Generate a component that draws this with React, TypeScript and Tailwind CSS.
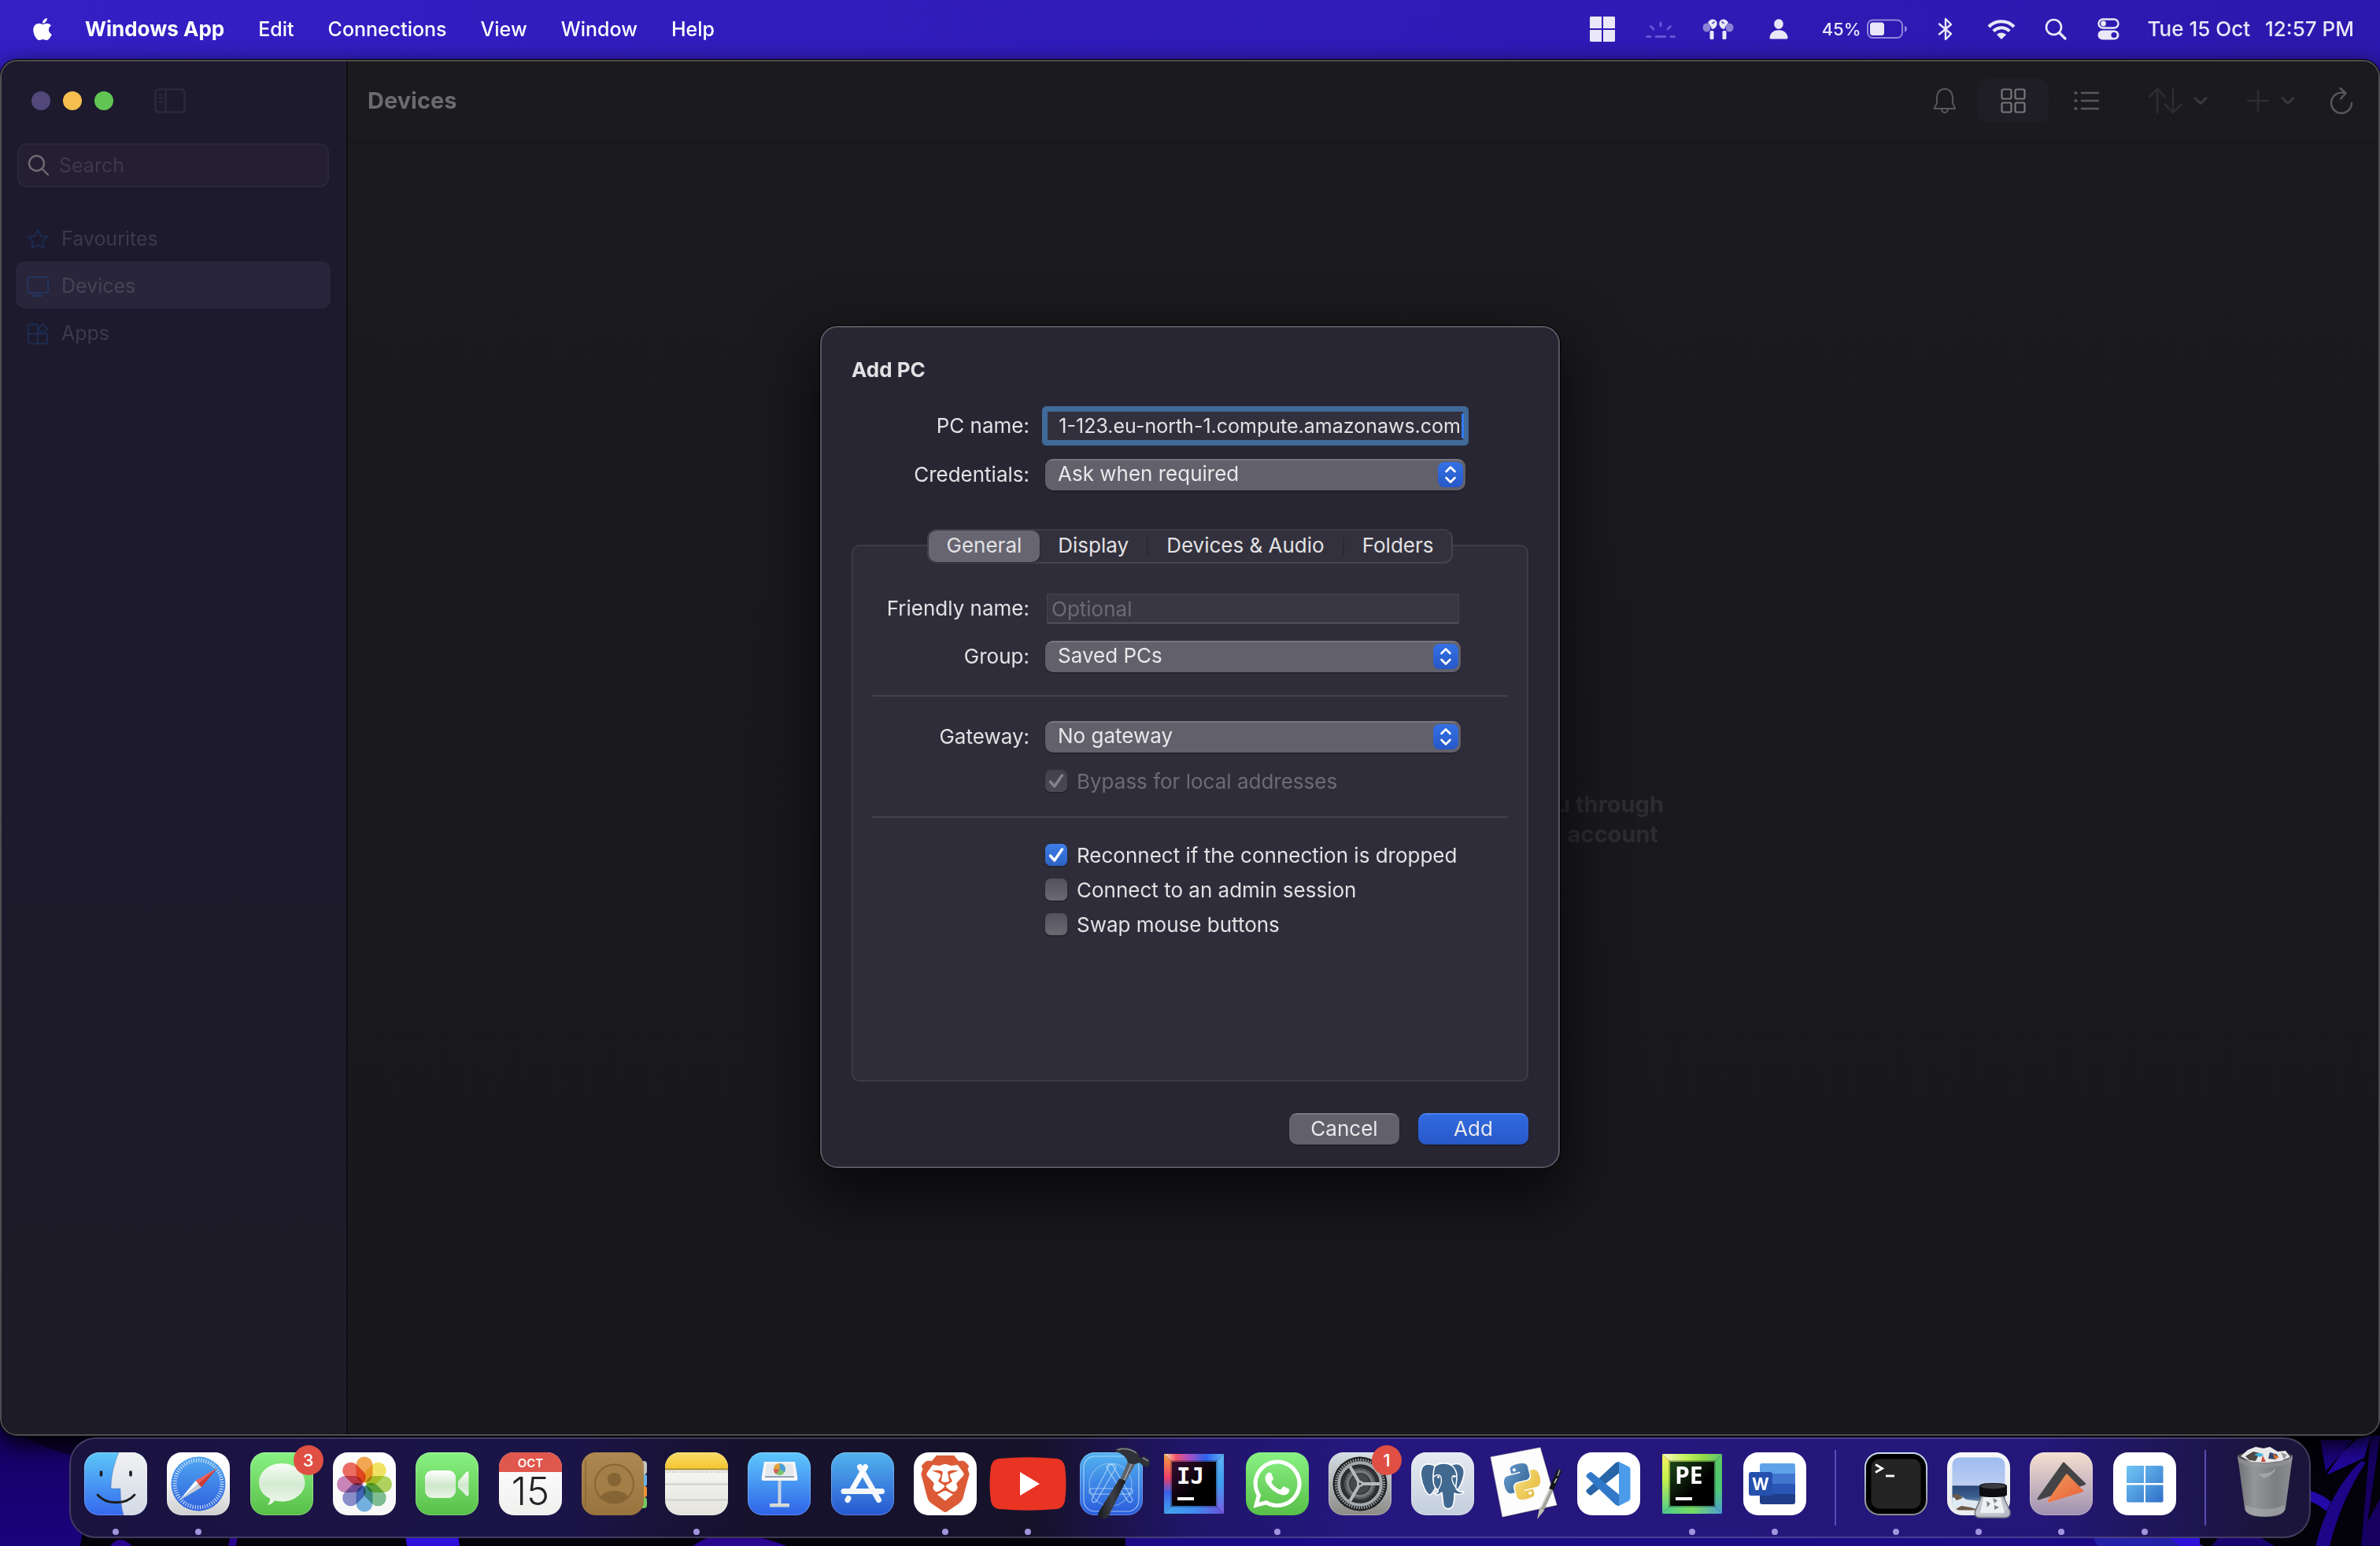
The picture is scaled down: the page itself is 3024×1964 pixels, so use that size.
import React, { useState } from "react";
import { FaApple, FaWhatsapp } from "react-icons/fa";
import { SiBrave } from "react-icons/si";

type Stop = [string, string];

function Lin({ id, stops, x2 = "0", y2 = "1" }: { id: string; stops: Stop[]; x2?: string; y2?: string }) {
  return (
    <linearGradient id={id} x1="0" y1="0" x2={x2} y2={y2}>
      {stops.map(([o, c]) => (
        <stop key={o} offset={o} stopColor={c} />
      ))}
    </linearGradient>
  );
}

function Tile({ id, stops, children }: { id: string; stops: Stop[]; children?: React.ReactNode }) {
  return (
    <svg viewBox="0 0 80 80" className="size-20 shrink-0 overflow-visible" aria-hidden="true">
      <defs>
        <Lin id={id} stops={stops} />
        <clipPath id={id + "-clip"}>
          <rect width="80" height="80" rx="19" />
        </clipPath>
      </defs>
      <rect width="80" height="80" rx="19" fill={`url(#${id})`} />
      <rect x="0.5" y="0.5" width="79" height="79" rx="18.5" fill="none" stroke="#fff" strokeOpacity="0.25" />
      {children}
    </svg>
  );
}

function Finder() {
  return (
    <Tile id="finder" stops={[["0", "#5cc6f8"], ["1", "#3468ee"]]}>
      <defs>
        <Lin id="finder-face" stops={[["0", "#f1f1f3"], ["1", "#d2dae6"]]} />
      </defs>
      <g clipPath="url(#finder-clip)">
        <path d="M44 0 C38 14 34 30 34 46 H46 C46 58 47 70 50 80 H80 V0 Z" fill="url(#finder-face)" />
      </g>
      <path d="M44 0 C38 14 34 30 34 46 H46 C46 58 47 70 50 80" fill="none" stroke="#4a6fa8" strokeOpacity="0.45" />
      <path d="M21.500 25 V29 M59 25 V29" stroke="#1c1c1e" strokeWidth="3.600" strokeLinecap="round" />
      <path d="M17 54 C28 67 53 67 64 54" fill="none" stroke="#1c1c1e" strokeWidth="2.800" strokeLinecap="round" />
    </Tile>
  );
}

function Safari() {
  return (
    <Tile id="safari" stops={[["0", "#ffffff"], ["0.4", "#fafafa"], ["1", "#cfcfcf"]]}>
      <defs>
        <Lin id="safari-dial" stops={[["0", "#4fa6f1"], ["1", "#2f62dd"]]} />
      </defs>
      <circle cx="40" cy="40" r="34.500" fill="url(#safari-dial)" />
      <circle cx="40" cy="40" r="30" fill="none" stroke="#e4f0fc" strokeOpacity="0.9" strokeWidth="5" strokeDasharray="1.100 2.041" />
      <path d="M64 20 L36.500 36 L40 40 Z" fill="#f0615a" />
      <path d="M64 20 L44 44.500 L40 40 Z" fill="#cf3a34" />
      <path d="M16 61 L36.500 36 L40 40 Z" fill="#ffffff" />
      <path d="M16 61 L44 44.500 L40 40 Z" fill="#c9cdd2" />
    </Tile>
  );
}

function Messages() {
  return (
    <Tile id="messages" stops={[["0", "#8af283"], ["1", "#58bf48"]]}>
      <defs>
        <Lin id="messages-bubble" stops={[["0", "#f7fdf6"], ["0.5", "#d5ead2"], ["1", "#eef8ec"]]} />
      </defs>
      <path
        d="M40 14 C56 14 69.500 25 69.500 38.500 C69.500 52 56 62.500 40 62.500 C36.500 62.500 33.500 62 31 61.300 C29 64.500 26 66 22 67 C24 64 25.500 61.500 25 58.800 C16 54.500 11 47 11 38.500 C11 25 24 14 40 14 Z"
        fill="url(#messages-bubble)"
      />
    </Tile>
  );
}

const petals = ["#f29a38", "#f0e14a", "#a5cf46", "#6cb984", "#5fa6e0", "#7a7fc4", "#c173b0", "#ea5548"];

function Photos() {
  return (
    <Tile id="photos" stops={[["0", "#ffffff"], ["1", "#f7f7f8"]]}>
      {petals.map((c, i) => (
        <rect
          key={c}
          x="29.500"
          y="5.500"
          width="21"
          height="33"
          rx="10.500"
          fill={c}
          fillOpacity="0.86"
          className="mix-blend-multiply"
          transform={`rotate(${i * 45} 40 40.500)`}
        />
      ))}
      <circle cx="40" cy="40.500" r="1.600" fill="#fff" />
    </Tile>
  );
}

function FaceTime() {
  return (
    <Tile id="facetime" stops={[["0", "#8af283"], ["1", "#58bf48"]]}>
      <defs>
        <Lin id="facetime-cam" stops={[["0", "#ffffff"], ["0.55", "#cfe8cb"], ["1", "#e8f5e6"]]} />
      </defs>
      <rect x="12" y="23" width="39" height="35" rx="9" fill="url(#facetime-cam)" />
      <path d="M54 37 L64.500 25 Q67.500 23 67.500 27 V53 Q67.500 57 64.500 55 L54 44.500 Z" fill="url(#facetime-cam)" />
    </Tile>
  );
}

function Calendar() {
  return (
    <Tile id="calendar" stops={[["0", "#ffffff"], ["1", "#f1f0ef"]]}>
      <g clipPath="url(#calendar-clip)">
        <rect width="80" height="25" fill="#e0574d" />
      </g>
      <text x="40" y="19" textAnchor="middle" fontSize="15" fontWeight="600" fill="#fff">OCT</text>
      <text x="40" y="67" textAnchor="middle" fontSize="49" fontWeight="300" fill="#242424">15</text>
    </Tile>
  );
}

function Contacts() {
  return (
    <svg viewBox="0 0 80 80" className="size-20 shrink-0 overflow-visible" aria-hidden="true">
      <defs>
        <Lin id="contacts" stops={[["0", "#ae8850"], ["1", "#98743f"]]} />
      </defs>
      <rect x="70" y="11" width="13" height="17" rx="4" fill="#c4c4c0" />
      <rect x="70" y="28" width="13" height="15" rx="3" fill="#6db4e8" />
      <rect x="70" y="43" width="13" height="14" rx="3" fill="#ec9434" />
      <rect x="70" y="57" width="13" height="14" rx="4" fill="#74c95e" />
      <rect width="79" height="80" rx="18" fill="url(#contacts)" />
      <path d="M5 10 V70" stroke="#8a6734" strokeWidth="1.500" />
      <circle cx="41.500" cy="40" r="24.500" fill="#a37e47" stroke="#876533" strokeWidth="2" />
      <circle cx="41.500" cy="34.500" r="8.800" fill="#866535" />
      <path d="M24 57 C28 46 55 46 59 57 C50 67 33 67 24 57 Z" fill="#866535" />
    </svg>
  );
}

function Notes() {
  return (
    <Tile id="notes" stops={[["0", "#fbfbfa"], ["1", "#e4e3dd"]]}>
      <defs>
        <Lin id="notes-top" stops={[["0", "#f9dc6c"], ["1", "#f5c62f"]]} />
      </defs>
      <g clipPath="url(#notes-clip)">
        <rect width="80" height="21" fill="url(#notes-top)" />
        <path d="M0 21.500 H80" stroke="#a88f3b" strokeWidth="2" />
        <path d="M2 25 H80" stroke="#bdbcb8" strokeWidth="2" strokeDasharray="1.500 2" />
        <path d="M0 40.500 H80 M0 60.500 H80" stroke="#d0cfcb" strokeWidth="2" />
      </g>
    </Tile>
  );
}

function Keynote() {
  return (
    <Tile id="keynote" stops={[["0", "#5ec7fb"], ["1", "#2f63e8"]]}>
      <path d="M38.500 34 H42.500 V68 H38.500 Z" fill="#c8d3df" />
      <rect x="28" y="65" width="25" height="4.500" rx="1" fill="#d8d8d6" />
      <path d="M21 12 H60 L63.500 33 Q63.500 36 61 36 H20 Q17.500 36 17.500 33 Z" fill="#f5f6f8" />
      <path d="M24 14.500 H57 L59 29 H22 Z" fill="#e4e8ec" />
      <path d="M22 31 H59" stroke="#8ca0b5" strokeWidth="2" />
      <circle cx="40.500" cy="21.500" r="7.500" fill="#7cc26a" />
      <path d="M40.500 21.500 V14 A7.500 7.500 0 0 1 47 25 Z" fill="#4a9fd8" />
      <path d="M40.500 21.500 V14 A7.500 7.500 0 0 0 33 21.500 Z" fill="#e7a13c" />
      <path d="M40.500 21.500 H33 A7.500 7.500 0 0 0 36 27.500 Z" fill="#da5a52" />
    </Tile>
  );
}

function AppStore() {
  return (
    <Tile id="appstore" stops={[["0", "#53b4ee"], ["1", "#2756d1"]]}>
      <g stroke="#f4f8fd" strokeWidth="7" strokeLinecap="round" fill="none">
        <path d="M16 49.500 H64.500" />
        <path d="M43.500 18.500 L27.500 46 M22 58.500 L21 60.500" />
        <path d="M36.500 18.500 L60.500 60.500" />
      </g>
      <path d="M44.500 18.500 L29 45.500" stroke="#ffffff" strokeWidth="4" strokeLinecap="round" />
    </Tile>
  );
}

function Brave() {
  return (
    <div className="flex size-20 shrink-0 items-center justify-center rounded-[19px] bg-white">
      <SiBrave className="size-[72px] text-[#dc5a35]" />
    </div>
  );
}

function YouTube() {
  return (
    <svg viewBox="0 0 98 68" className="h-[68px] w-[98px] shrink-0" aria-hidden="true">
      <path
        d="M12 2 Q49 -1.500 86 2 Q94 3 96 12 Q99 34 96 56 Q94 65 86 66 Q49 69.500 12 66 Q4 65 2 56 Q-1 34 2 12 Q4 3 12 2 Z"
        fill="#e93323"
      />
      <path d="M39 19 L64 34 L39 49 Z" fill="#fff" />
    </svg>
  );
}

function Xcode() {
  return (
    <Tile id="xcode" stops={[["0", "#52b2ef"], ["1", "#2a5bdc"]]}>
      <defs>
        <Lin id="xcode-handle" x2="1" y2="0" stops={[["0", "#17181b"], ["0.5", "#3c3f45"], ["1", "#1b1c1f"]]} />
      </defs>
      <g fill="none" stroke="#bfe0fb" strokeOpacity="0.75" strokeWidth="1.200">
        <rect x="5" y="5" width="70" height="70" rx="14" />
        <circle cx="39" cy="41" r="27" strokeOpacity="0.5" />
        <rect x="12" y="46" width="55" height="7" rx="3.500" />
        <path d="M34.500 17 Q38 13 42 17 L67 60 Q65 66 61 62 L34 19 Z" />
        <path d="M45 17 Q41 13 37 17 L15 60 Q16 66 21 62 L46 19 Z" />
      </g>
      <path d="M61 12 L51.500 34 L58 37 L71 14 Z" fill="#5d6168" />
      <path d="M66 14 L56 36" stroke="#a7abb1" strokeWidth="1.500" />
      <path d="M50.500 33 L58.500 36.500 L37 80 Q31 88 24 82 Q22 79 24.500 75 Z" fill="url(#xcode-handle)" />
      <path
        d="M45 -3 C49 -8 62 -7 70 -2 C75 1 76 4 76 7 L82 5 L89 10 L87 19 L79 16 L76 13 C72 15 66 16 61 13 C60 6 53 1 45 -1 Z"
        fill="#303237"
      />
      <path d="M48 -3 C56 -6 66 -4 72 1" stroke="#85888e" strokeWidth="1.500" fill="none" />
      <path d="M80 7 L87 11" stroke="#85888e" strokeWidth="1.500" />
    </Tile>
  );
}

function JetBrains({
  id,
  label,
  sides,
  inner,
  mono,
}: {
  id: string;
  label: string;
  sides: [Stop[], Stop[], Stop[], Stop[]];
  inner: string;
  mono: boolean;
}) {
  return (
    <svg viewBox="0 0 76 76" className="size-[76px] shrink-0" aria-hidden="true">
      <defs>
        <Lin id={id + "-t"} x2="1" y2="0" stops={sides[0]} />
        <Lin id={id + "-r"} stops={sides[1]} />
        <Lin id={id + "-b"} x2="1" y2="0" stops={sides[2]} />
        <Lin id={id + "-l"} stops={sides[3]} />
        <Lin id={id + "-c"} x2="1" stops={[["0", inner], ["0.6", "#000000"]]} />
      </defs>
      <path d="M0 0 H76 L66 10 H10 Z" fill={`url(#${id}-t)`} />
      <path d="M76 0 V76 L66 66 V10 Z" fill={`url(#${id}-r)`} />
      <path d="M0 76 H76 L66 66 H10 Z" fill={`url(#${id}-b)`} />
      <path d="M0 0 V76 L10 66 V10 Z" fill={`url(#${id}-l)`} />
      <rect x="8" y="8" width="60" height="60" fill="#000" fillOpacity="0.25" />
      <rect x="10" y="10" width="56" height="56" fill={`url(#${id}-c)`} />
      <text
        x="16"
        y="38"
        fontSize={mono ? 29 : 30}
        fontWeight="700"
        fill="#fff"
        fontFamily={mono ? "DejaVu Sans Mono, monospace" : "Open Sans, sans-serif"}
      >
        {label}
      </text>
      <rect x="17" y="55" width="21" height="4" fill="#fff" />
    </svg>
  );
}

function WhatsApp() {
  return (
    <div className="flex size-20 shrink-0 items-center justify-center rounded-[19px] bg-linear-to-b from-[#8af283] to-[#58bf48]">
      <FaWhatsapp className="size-[70px] text-white" />
    </div>
  );
}

function Settings() {
  return (
    <Tile id="settings" stops={[["0", "#d5dfe5"], ["1", "#8c8a87"]]}>
      <circle cx="40" cy="40" r="34.500" fill="#1d1e20" />
      <circle cx="40" cy="40" r="30.500" fill="none" stroke="#9b9fa2" strokeWidth="3.500" strokeDasharray="1.600 1.594" />
      <circle cx="40" cy="40" r="26.800" fill="none" stroke="#a4a9ac" strokeWidth="4" />
      <circle cx="40" cy="40" r="24" fill="#2f3032" />
      <circle cx="40" cy="40" r="18.500" fill="none" stroke="#7d8184" strokeWidth="2.500" strokeDasharray="1.200 1" />
      <circle cx="40" cy="40" r="15.500" fill="none" stroke="#75797c" strokeWidth="3.500" />
      <circle cx="40" cy="40" r="12.500" fill="#47484a" />
      <path d="M40 40 H65 M40 40 L27.500 18.500 M40 40 L27.500 61.500" stroke="#b6babd" strokeWidth="4" />
      <circle cx="40" cy="40" r="4" fill="#b6babd" />
      <circle cx="40" cy="40" r="1.500" fill="#333" />
    </Tile>
  );
}

function Postgres() {
  return (
    <Tile id="postgres" stops={[["0", "#e6ebf2"], ["1", "#c3cedd"]]}>
      <g fill="#41688f" stroke="#fff" strokeWidth="1.600" strokeLinejoin="round">
        <path d="M28 16 C16 12 11 19 12.500 31 C14 43 20 54 24 54 C27 53 29 48 31 45 C27 37 28 25 31 18 Z" />
        <path d="M51 16 C62 11 69 19 67 29 C65 39 61 46 57 49 C53 42 54 28 51 16 Z" />
        <path d="M30 18 C35 13 47 12 53 18 C60 25 58 35 57 41 C56 46 58 49 62 50 C64 50.500 66 49.500 67 50 C65 54 59 54 55 52 C55 58 55 63 53 68 C50 73 43 73 41 67 C40 62 40 56 39 51 C37 54 32 55 29 52.500 C33 52 35 50 34 48 C29 45 28 40 28 34 C28 28 28 22 30 18 Z" />
        <path d="M28 32 C32 27 37 28 38 32 C40 40 36 44 34 48" fill="none" strokeWidth="1.300" />
        <path d="M57 31 C53 28 51 31 52 35 C53 40 55 42 57 45" fill="none" strokeWidth="1.300" />
      </g>
      <circle cx="34.500" cy="31.500" r="1.400" fill="#fff" />
      <circle cx="54.500" cy="31" r="1.200" fill="#fff" />
    </Tile>
  );
}

function PythonIdle() {
  return (
    <svg viewBox="0 0 80 80" className="size-20 shrink-0 overflow-visible" aria-hidden="true">
      <defs>
        <Lin id="py-blue" x2="1" stops={[["0", "#6fa0d0"], ["1", "#2c5f92"]]} />
        <Lin id="py-yellow" x2="1" stops={[["0", "#f7e184"], ["1", "#e3b535"]]} />
      </defs>
      <path d="M-4 7 L59 -5 L80 68 L11 83 Z" fill="#000" fillOpacity="0.3" />
      <path d="M-5 6 L58 -6 L79 67 L10 82 Z" fill="#fdfdfd" stroke="#cfcfcf" strokeWidth="0.700" />
      <g transform="translate(11 13) rotate(-14 24 24) translate(1 1) scale(1.92)">
        <path
          fill="url(#py-blue)"
          d="M14.25.18l.9.2.73.26.59.3.45.32.34.34.25.34.16.33.1.3.04.26.02.2-.01.13V8.5l-.05.63-.13.55-.21.46-.26.38-.3.31-.33.25-.35.19-.35.14-.33.1-.3.07-.26.04-.21.02H8.77l-.69.05-.59.14-.5.22-.41.27-.33.32-.27.35-.2.36-.15.37-.1.35-.07.32-.04.27-.02.21v3.06H3.17l-.21-.03-.28-.07-.32-.12-.35-.18-.36-.26-.36-.36-.35-.46-.32-.59-.28-.73-.21-.88-.14-1.05-.05-1.23.06-1.22.16-1.04.24-.87.32-.71.36-.57.4-.44.42-.33.42-.24.4-.16.36-.1.32-.05.24-.01h.16l.06.01h8.16v-.83H6.18l-.01-2.75-.02-.37.05-.34.11-.31.17-.28.25-.26.31-.23.38-.2.44-.18.51-.15.58-.12.64-.1.71-.06.77-.04.84-.02 1.27.05z"
        />
        <path
          fill="url(#py-yellow)"
          d="M21.04 6.11l.28.06.32.12.35.18.36.27.36.35.35.47.32.59.28.73.21.88.14 1.04.05 1.23-.06 1.23-.16 1.04-.24.86-.32.71-.36.57-.4.45-.42.33-.42.24-.4.16-.36.09-.32.05-.24.02-.16-.01h-8.22v.82h5.84l.01 2.76.02.36-.05.34-.11.31-.17.29-.25.25-.31.24-.38.2-.44.17-.51.15-.58.13-.64.09-.71.07-.77.04-.84.01-1.27-.04-1.07-.14-.9-.2-.73-.25-.59-.3-.45-.33-.34-.34-.25-.34-.16-.33-.1-.3-.04-.25-.02-.2.01-.13v-5.34l.05-.64.13-.54.21-.46.26-.38.3-.32.33-.24.35-.2.35-.14.33-.1.3-.06.26-.04.21-.02.13-.01h5.84l.69-.05.59-.14.5-.21.41-.28.33-.32.27-.35.2-.36.15-.36.1-.35.07-.32.04-.28.02-.21V6.07h2.09l.14.01z"
        />
        <circle cx="8.700" cy="3.300" r="1.100" fill="#fff" />
        <circle cx="15.300" cy="20.700" r="1.100" fill="#fff" />
      </g>
      <path d="M82 24 L72 47" stroke="#15161c" strokeWidth="6" strokeLinecap="round" />
      <path d="M83 22 L80 30" stroke="#8c8f95" strokeWidth="2" />
      <path d="M79 33 L76 39" stroke="#d8d8d8" strokeWidth="1.500" />
      <path d="M72 47 L60 73" stroke="#a3a29b" strokeWidth="5.500" />
      <path d="M70 47 L59 70" stroke="#e4e2da" strokeWidth="1.500" />
      <path d="M57 71 L63 74 L54 85 Z" fill="#c2beb2" />
    </svg>
  );
}

function VSCode() {
  return (
    <Tile id="vscode" stops={[["0", "#ffffff"], ["1", "#ffffff"]]}>
      <path d="M11.500 48 Q11 50 12.500 51.500 L15.500 54 Q17 55 18.500 54 L53 26.500 V12 Q50 12 48 14 Z" fill="#2865a8" />
      <path d="M11.500 31 Q11 29 12.500 28 L15.500 25.500 Q17 24.500 18.500 25.500 L53 53.500 V68 Q50 68 48 66 Z" fill="#3278c8" />
      <path d="M53 12 L66 18.500 Q67.500 19.500 67.500 22 V58 Q67.500 60.500 66 61.500 L53 68 Z" fill="#4c9be9" />
    </Tile>
  );
}

function Word() {
  return (
    <Tile id="word" stops={[["0", "#ffffff"], ["1", "#ffffff"]]}>
      <defs>
        <clipPath id="word-doc">
          <rect x="21" y="14" width="45" height="52" rx="3" />
        </clipPath>
      </defs>
      <g clipPath="url(#word-doc)">
        <path d="M21 14 H66 V27 H21 Z" fill="#5da2e8" />
        <path d="M21 27 H66 V40 H21 Z" fill="#4377cf" />
        <path d="M21 40 H66 V53 H21 Z" fill="#2b56b8" />
        <path d="M21 53 H66 V66 H21 Z" fill="#1f3d88" />
      </g>
      <rect x="7" y="25" width="30" height="30" rx="3" fill="#2550ae" />
      <text x="22" y="48" textAnchor="middle" fontSize="21" fontWeight="700" fill="#fff">W</text>
    </Tile>
  );
}

function Terminal() {
  return (
    <Tile id="terminal" stops={[["0", "#c6dcea"], ["1", "#77777b"]]}>
      <rect x="2" y="2" width="76" height="76" rx="17" fill="#000" />
      <rect x="8.500" y="8.500" width="63" height="63" rx="10" fill="#242424" />
      <path d="M14 15.500 L22.500 20.500 L14 25.500" fill="none" stroke="#fff" strokeWidth="2.800" />
      <path d="M27 30 H38" stroke="#fff" strokeWidth="2.800" />
    </Tile>
  );
}

function Preview() {
  return (
    <Tile id="preview" stops={[["0", "#f7f7f9"], ["1", "#ebebee"]]}>
      <defs>
        <Lin id="preview-sky" stops={[["0", "#9dbcf0"], ["0.53", "#bccdf0"], ["0.54", "#2b4677"], ["0.75", "#3d5f92"], ["1", "#e8eef2"]]} />
        <clipPath id="preview-pic">
          <rect x="6.500" y="6.500" width="67" height="67" rx="9" />
        </clipPath>
      </defs>
      <g clipPath="url(#preview-pic)">
        <rect x="6" y="6" width="68" height="68" fill="url(#preview-sky)" />
        <path d="M6 58 Q16 52 24 60 L40 62 V75 H6 Z" fill="#dfe9f1" />
        <path d="M6 54 L14 53 L20 58 L12 61 Z M8 74 L18 68 L30 70 L44 74 Z" fill="#6b5a48" />
      </g>
      <path d="M44 55 H71 L80 75 Q81 83 73 83 H42 Q34 83 35.500 75 Z" fill="#c3c7cc" fillOpacity="0.93" stroke="#75787c" strokeWidth="1.500" />
      <path d="M46 57 H68 L73 77 H42 Z" fill="#eef0f2" />
      <path d="M50 62 L55 65 L51 70 Z M58 58 L64 61 L60 65 Z M60 67 L66 70 L60 73 Z" fill="#80858c" />
      <path d="M41 43 Q41 39 58 39 Q76 39 76 43 V54 Q75 57 58 57 Q41 57 41 54 Z" fill="#0e0e10" />
      <ellipse cx="58.500" cy="43" rx="16" ry="3.300" fill="#3a3b3e" />
    </Tile>
  );
}

function Prism() {
  return (
    <Tile id="prism" stops={[["0", "#f5e0d0"], ["1", "#9f8fb0"]]}>
      <defs>
        <Lin id="prism-o" x2="1" stops={[["0", "#f09a5c"], ["1", "#e85f38"]]} />
      </defs>
      <path d="M43 14 L69.500 40 L11 59 Z" fill="#444446" stroke="#444446" strokeWidth="3" strokeLinejoin="round" />
      <path d="M47 29 L66.500 49 L24 62 Z" fill="url(#prism-o)" stroke="url(#prism-o)" strokeWidth="3" strokeLinejoin="round" />
    </Tile>
  );
}

function WindowsApp() {
  return (
    <Tile id="winapp" stops={[["0", "#ffffff"], ["1", "#ffffff"]]}>
      <defs>
        <linearGradient id="winapp-g" gradientUnits="userSpaceOnUse" x1="16" y1="16" x2="64" y2="64">
          <stop offset="0" stopColor="#72c8f6" />
          <stop offset="1" stopColor="#2f6fc8" />
        </linearGradient>
      </defs>
      <g fill="url(#winapp-g)">
        <path d="M19 17 H39 V39 H17 V19 Q17 17 19 17 Z" />
        <path d="M41 17 H61.500 Q63.500 17 63.500 19 V39 H41 Z" />
        <path d="M17 41.500 H39 V63.500 H19 Q17 63.500 17 61.500 Z" />
        <path d="M41 41.500 H63.500 V61.500 Q63.500 63.500 61.500 63.500 H41 Z" />
      </g>
    </Tile>
  );
}

function Trash() {
  return (
    <svg viewBox="0 0 80 92" className="h-[92px] w-20 shrink-0" aria-hidden="true">
      <defs>
        <Lin id="trash" x2="1" y2="0" stops={[["0", "#6f7176"], ["0.3", "#94969a"], ["0.7", "#7b7d81"], ["1", "#8d8f93"]]} />
      </defs>
      <path d="M5 13 Q40 4 75 13 L66 80 Q64 91 40 91 Q16 91 14 80 Z" fill="url(#trash)" />
      <ellipse cx="40" cy="14" rx="34" ry="7" fill="#43444a" />
      <path d="M9 14 L18 6 L28 2 L38 4 L46 2 L56 8 L66 7 L72 15 L60 20 L42 22 L22 21 Z" fill="#e9e9e9" />
      <path d="M15 14 L25 8 L33 10 L28 20 L20 19 Z" fill="#4c4743" />
      <path d="M26 12 Q34 8 38 12 L34 15 Z" fill="#3fb6de" />
      <path d="M46 9 L56 12 L54 18 L44 17 Z" fill="#34456d" />
      <path d="M50 11 L58 15 L52 18 Z" fill="#d96f2c" />
      <path d="M37 13 L41 21 L35 21 Z" fill="#c94f3d" />
      <path d="M60 9 L68 12 L64 18 Z" fill="#9a9a9a" />
      <path d="M5 14 Q20 24 40 24 Q60 24 75 14 L74 22 Q40 34 6 22 Z" fill="#97999c" fillOpacity="0.5" />
      <path d="M32 36 Q46 38 54 28 Q52 38 38 42 Z" fill="#c0c2c4" fillOpacity="0.5" />
      <path d="M15 76 Q40 86 65 76 L64 83 Q60 90 40 90 Q18 90 15 83 Z" fill="#a9abae" fillOpacity="0.6" />
    </svg>
  );
}

type DockItem = { name: string; icon: React.ReactNode; running?: boolean; badge?: string };

const apps: DockItem[] = [
  { name: "Finder", icon: <Finder />, running: true },
  { name: "Safari", icon: <Safari />, running: true },
  { name: "Messages", icon: <Messages />, badge: "3" },
  { name: "Photos", icon: <Photos /> },
  { name: "FaceTime", icon: <FaceTime /> },
  { name: "Calendar", icon: <Calendar /> },
  { name: "Contacts", icon: <Contacts /> },
  { name: "Notes", icon: <Notes />, running: true },
  { name: "Keynote", icon: <Keynote /> },
  { name: "App Store", icon: <AppStore /> },
  { name: "Brave", icon: <Brave />, running: true },
  { name: "YouTube", icon: <YouTube />, running: true },
  { name: "Xcode", icon: <Xcode /> },
  {
    name: "IntelliJ IDEA",
    icon: (
      <JetBrains
        id="ij"
        label="IJ"
        mono
        inner="#3a0d33"
        sides={[
          [["0", "#fbe9b0"], ["0.2", "#f0556a"], ["0.4", "#b04fc0"], ["0.7", "#2f62ee"], ["1", "#5cb4f0"]],
          [["0", "#5cb4f0"], ["0.5", "#3f9df0"], ["1", "#7a5be0"]],
          [["0", "#45a5ee"], ["0.5", "#3f8df0"], ["1", "#6a52d8"]],
          [["0", "#f8a03c"], ["0.4", "#ec3f6a"], ["0.65", "#3b62e8"], ["1", "#45a5ee"]],
        ]}
      />
    ),
  },
  { name: "WhatsApp", icon: <WhatsApp />, running: true },
  { name: "System Settings", icon: <Settings />, badge: "1" },
  { name: "PostgreSQL", icon: <Postgres /> },
  { name: "IDLE", icon: <PythonIdle /> },
  { name: "Visual Studio Code", icon: <VSCode /> },
  {
    name: "PyCharm",
    icon: (
      <JetBrains
        id="pe"
        label="PE"
        mono={false}
        inner="#1d4a18"
        sides={[
          [["0", "#fdf9c0"], ["0.4", "#c4f25a"], ["0.7", "#8fd84a"], ["1", "#5cc870"]],
          [["0", "#5cc860"], ["0.6", "#4fc878"], ["1", "#4c9fd0"]],
          [["0", "#4cc88c"], ["0.5", "#76dc62"], ["1", "#4c9fd0"]],
          [["0", "#f4f060"], ["0.4", "#c8f24c"], ["1", "#4cc88c"]],
        ]}
      />
    ),
    running: true,
  },
  { name: "Word", icon: <Word />, running: true },
];

const recents: DockItem[] = [
  { name: "Terminal", icon: <Terminal />, running: true },
  { name: "Preview", icon: <Preview />, running: true },
  { name: "Prism", icon: <Prism />, running: true },
  { name: "Windows App", icon: <WindowsApp />, running: true },
];

function DockSlot({ item }: { item: DockItem }) {
  return (
    <li className="flex min-w-0 flex-1 flex-col items-center">
      <button type="button" aria-label={item.name} className="relative mt-[17px] flex h-20 items-center justify-center">
        {item.icon}
        {item.badge && (
          <span className="absolute -top-[9px] -right-[13px] flex size-[38px] items-center justify-center rounded-full bg-[#e04f44] text-[22px] font-medium text-white">
            {item.badge}
          </span>
        )}
      </button>
      {item.running && <span className="mt-[17px] size-2 rounded-full bg-[#a295df]" />}
    </li>
  );
}

function DockRule() {
  return (
    <li aria-hidden="true" className="flex w-12 justify-center pt-[14px]">
      <span className="h-24 w-[2px] bg-[#5a4bb8]" />
    </li>
  );
}

function Dock() {
  return (
    <footer className="relative flex justify-center px-[88px] pt-[2px] pb-[10px]">
      <ul className="flex h-32 w-full rounded-[34px] border-2 border-[#ffffff2c] bg-[linear-gradient(90deg,#1a1340_0%,#1b1448_22%,#17122e_30%,#16122a_43%,#21156a_50%,#26177f_58%,#241779_88%,#1b153c_98%)] pr-[3px] pl-[4px]">
        {apps.map((a) => (
          <DockSlot key={a.name} item={a} />
        ))}
        <DockRule />
        {recents.map((a) => (
          <DockSlot key={a.name} item={a} />
        ))}
        <DockRule />
        <li className="flex min-w-0 flex-1 justify-center">
          <button type="button" aria-label="Trash" className="mt-[8px] flex h-[92px]">
            <Trash />
          </button>
        </li>
      </ul>
    </footer>
  );
}

function Wallpaper() {
  return (
    <div aria-hidden="true" className="absolute inset-0 bg-linear-to-r from-[#331fc4] to-[#2d18ae]">
      <svg viewBox="0 0 3024 180" preserveAspectRatio="none" className="absolute bottom-0 left-0 h-[180px] w-full">
        <defs>
          <Lin id="wall-left" stops={[["0", "#150060"], ["1", "#1a037c"]]} />
        </defs>
        <rect width="3024" height="180" fill="#030109" />
        <path d="M0 0 H200 L120 70 L102 180 H0 Z" fill="url(#wall-left)" />
        <path d="M30 0 H300 L120 70 Q60 60 30 40 Z" fill="#0d0033" />
        <path d="M140 180 Q152 164 168 180 Z M290 180 L294 160 H303 L300 180 Z M880 180 Q920 150 1000 180 Z" fill="#2a0590" />
        <path d="M517 180 L515 166 H582 L584 180 Z M1490 180 Q1500 160 1560 165 L1600 180 Z" fill="#2e12dc" />
        <path d="M1430 170 H2700 V180 H1430 Z" fill="#1d0a86" />
        <path d="M2660 170 H2780 L2800 180 H2665 Z" fill="#2420a8" />
        <path d="M2755 168 H2795 V180 H2770 Z" fill="#2e12dc" />
        <path d="M2820 168 H2870 L2890 180 H2810 Z" fill="#1a0570" />
        <path d="M2948 45 H2990 L2955 85 Z" fill="#1b0480" />
        <path d="M3012 40 L3004 68 L2956 90 L2975 62 L2995 44 Z" fill="#22089a" />
        <path d="M3000 72 Q2960 110 2942 180 H2960 Q2975 120 3006 74 Z" fill="#1e0588" />
        <path d="M3012 40 H3024 L3008 150 L3024 120 V180 H3000 Z" fill="#150060" />
        <path d="M2936 110 Q2950 114 2962 124 L2956 136 Q2944 126 2936 124 Z" fill="#2209a8" />
      </svg>
    </div>
  );
}

const menus = ["Edit", "Connections", "View", "Window", "Help"];

function MenuBar() {
  return (
    <header className="relative flex h-[76px] items-center justify-between pr-[33px] pb-[3px] pl-[38px] text-[26px] leading-8 font-medium text-white">
      <nav aria-label="Application menu" className="flex items-center gap-[43px] text-[25px]">
        <button type="button" aria-label="Apple menu">
          <FaApple className="size-8" />
        </button>
        <button type="button" className="-ml-[5px] text-[26px] font-bold">Windows App</button>
        {menus.map((m) => (
          <button type="button" key={m}>
            {m}
          </button>
        ))}
      </nav>
      <div className="flex items-center text-[#eae7f8]">
        <svg viewBox="0 0 32 32" className="mr-[39px] size-8" fill="currentColor" aria-hidden="true">
          <path d="M1 0 H15 V15 H0 V1 Z M17 0 H31 L32 1 V15 H17 Z M0 17 H15 V32 H1 L0 31 Z M17 17 H32 V31 L31 32 H17 Z" />
        </svg>
        <svg viewBox="0 0 38 24" className="mr-[34px] h-6 w-[38px]" fill="none" stroke="#6554d8" strokeWidth="3" strokeLinecap="round" aria-hidden="true">
          <path d="M19 4 V8 M6.500 8.500 L10 12 M31.500 8.500 L28 12 M1.500 21.500 H6 M13 21.500 H25 M32 21.500 H36.500" />
        </svg>
        <svg viewBox="0 0 40 28" className="mr-[45px] h-7 w-10" fill="currentColor" aria-hidden="true">
          <path d="M7 6 C9 1 15 0 18 4 C20 8 17 14 12 14 C11 10 9 8 7 6 Z M33 6 C31 1 25 0 22 4 C20 8 23 14 28 14 C29 10 31 8 33 6 Z" />
          <rect x="9.500" y="16" width="5" height="11" rx="1.500" />
          <rect x="25.500" y="16" width="5" height="11" rx="1.500" />
          <ellipse cx="5.500" cy="12" rx="5" ry="5.500" fillOpacity="0.5" />
          <ellipse cx="34.500" cy="12" rx="5" ry="5.500" fillOpacity="0.5" />
          <path d="M12.500 7 L15.500 4.500 M27.500 7 L24.500 4.500" stroke="#311dbd" strokeWidth="1.500" />
        </svg>
        <svg viewBox="0 0 24 26" className="mr-[43px] h-[26px] w-6" fill="currentColor" aria-hidden="true">
          <ellipse cx="12" cy="6.500" rx="5.800" ry="6.300" />
          <path d="M0.500 24 C1 11 23 11 23.500 24 Q23.500 25.500 22 25.500 H2 Q0.500 25.500 0.500 24 Z" />
        </svg>
        <span className="mr-[7px] text-[22px]">45%</span>
        <svg viewBox="0 0 52 26" className="mr-[38px] h-[26px] w-[52px]" aria-hidden="true">
          <rect x="1" y="1.500" width="44" height="22.500" rx="6.500" fill="none" stroke="#9386dd" strokeWidth="2" />
          <rect x="4" y="4.500" width="18" height="16.500" rx="3.500" fill="currentColor" />
          <path d="M48 8.500 Q51 10 51 12.750 Q51 15.500 48 17 Z" fill="#9386dd" />
        </svg>
        <svg viewBox="0 0 20 30" className="mr-[43px] h-[30px] w-5" fill="none" stroke="currentColor" strokeWidth="2.400" strokeLinejoin="round" strokeLinecap="round" aria-hidden="true">
          <path d="M2 8.500 L17 21 L10 28 V2 L17 9 L2 21.500" />
        </svg>
        <svg viewBox="0 0 36 26" className="mr-[37px] h-[26px] w-9" fill="none" stroke="currentColor" strokeWidth="4.200" aria-hidden="true">
          <path d="M2 10 C10.500 1 25.500 1 34 10" />
          <path d="M7.800 15.600 C13.500 9.800 22.500 9.800 28.200 15.600" />
          <path d="M12 20 C15.500 16.500 20.500 16.500 24 20 L18 26 Z" fill="currentColor" stroke="none" />
        </svg>
        <svg viewBox="0 0 28 28" className="mr-[39px] size-7" fill="none" stroke="currentColor" strokeWidth="2.600" strokeLinecap="round" aria-hidden="true">
          <circle cx="11.500" cy="11.500" r="9.500" />
          <path d="M18.500 18.500 L26 26" strokeWidth="3.200" />
        </svg>
        <svg viewBox="0 0 28 28" className="mr-[36px] size-7" aria-hidden="true">
          <rect x="1.500" y="1.500" width="25" height="11" rx="5.500" fill="none" stroke="currentColor" strokeWidth="2.400" />
          <circle cx="7.500" cy="7" r="3.400" fill="currentColor" />
          <rect x="0.500" y="15.500" width="27" height="12" rx="6" fill="currentColor" />
          <circle cx="21" cy="21.500" r="3.600" fill="#2f1bb4" />
        </svg>
        <span className="mr-[19px]">Tue 15 Oct</span>
        <span>12:57 PM</span>
      </div>
    </header>
  );
}

function StarIcon() {
  return (
    <svg viewBox="0 0 28 28" className="size-7" fill="none" stroke="currentColor" strokeWidth="2" strokeLinejoin="round" aria-hidden="true">
      <path d="M14 2 L17.700 9.900 L26.200 10.800 L19.900 16.600 L21.700 25.200 L14 20.900 L6.300 25.200 L8.100 16.600 L1.800 10.800 L10.300 9.900 Z" />
    </svg>
  );
}

function MonitorIcon() {
  return (
    <svg viewBox="0 0 28 28" className="size-7" fill="none" stroke="currentColor" strokeWidth="2" aria-hidden="true">
      <rect x="1" y="2" width="26" height="20" rx="2.500" />
      <path d="M11 22 V25.500 M17 22 V25.500 M7 26 H21" />
    </svg>
  );
}

function AppsIcon() {
  return (
    <svg viewBox="0 0 28 28" className="size-7" fill="none" stroke="currentColor" strokeWidth="2" strokeLinejoin="round" aria-hidden="true">
      <path d="M14 14 V3.500 Q14 2 12.500 2 H3.500 Q2 2 2 3.500 V25 Q2 26.500 3.500 26.500 H24.500 Q26 26.500 26 25 V15.500 Q26 14 24.500 14 Z M2 14 H14 V26.500" />
      <path d="M20.500 1.500 L26.500 7.500 L20.500 13.500 L14.500 7.500 Z" />
    </svg>
  );
}

const places = [
  { name: "Favourites", icon: <StarIcon /> },
  { name: "Devices", icon: <MonitorIcon /> },
  { name: "Apps", icon: <AppsIcon /> },
];

function Sidebar() {
  return (
    <aside className="flex w-[440px] shrink-0 flex-col border-r-2 border-[#0e0d12] bg-linear-to-b from-[#1e1a2e] via-[#1d1a2c] to-[#1c1b26] pr-5 pl-[18px]">
      <div className="flex h-[104px] items-center pb-1 pl-[20px]">
        <div className="flex gap-4">
          <button type="button" aria-label="Close" className="size-6 rounded-full bg-[#53487a]" />
          <button type="button" aria-label="Minimise" className="size-6 rounded-full bg-[#f5bf4f]" />
          <button type="button" aria-label="Zoom" className="size-6 rounded-full bg-[#61c554]" />
        </div>
        <button type="button" aria-label="Toggle sidebar" className="ml-[52px]">
          <svg viewBox="0 0 40 32" className="h-8 w-10" fill="none" stroke="#2d293d" strokeWidth="2.400" aria-hidden="true">
            <rect x="1.500" y="1.500" width="37" height="29" rx="4" />
            <path d="M14.500 2 V30 M5.500 8.500 H10.500 M5.500 13 H10.500 M5.500 17.500 H10.500" />
          </svg>
        </button>
      </div>
      <label className="mx-[2px] flex h-14 items-center gap-[12px] rounded-xl border-2 border-[#2b273b] bg-[#241f32] pl-[11px]">
        <svg viewBox="0 0 28 28" className="size-7 shrink-0" fill="none" stroke="#6d6a72" strokeWidth="2.400" strokeLinecap="round" aria-hidden="true">
          <circle cx="11.500" cy="11.500" r="9.500" />
          <path d="M18.500 18.500 L26 26" />
        </svg>
        <input
          type="search"
          aria-label="Search"
          placeholder="Search"
          className="w-full min-w-0 bg-transparent text-[25px] leading-8 text-[#716c80] outline-none placeholder:text-[#3d394a]"
        />
      </label>
      <nav aria-label="Library" className="mt-[34px] flex flex-col">
        {places.map((p) => (
          <a
            key={p.name}
            href={"#" + p.name.toLowerCase()}
            className={
              p.name === "Devices"
                ? "flex h-[60px] items-center gap-[16px] rounded-xl bg-[#29253a] pt-[3px] pl-[14px] text-[25px] text-[#474355]"
                : "flex h-[60px] items-center gap-[16px] rounded-xl pt-[3px] pl-[14px] text-[25px] text-[#3d394a]"
            }
          >
            <span className={p.name === "Devices" ? "text-[#24345f]" : "text-[#1c2b50]"}>{p.icon}</span>
            {p.name}
          </a>
        ))}
      </nav>
    </aside>
  );
}

function ChevronDown() {
  return (
    <svg viewBox="0 0 20 20" className="size-5" fill="none" stroke="#3b3a3e" strokeWidth="2.800" strokeLinecap="round" strokeLinejoin="round" aria-hidden="true">
      <path d="M3 6.500 L10 13.500 L17 6.500" />
    </svg>
  );
}

function Toolbar() {
  return (
    <div className="flex h-[104px] items-center justify-between border-b-2 border-[#18171b] pr-[31px] pb-[2px] pl-[25px]">
      <h1 className="text-[29px] leading-10 font-bold text-[#6b6a6c]">Devices</h1>
      <div className="flex items-center text-[#59585c]">
        <button type="button" aria-label="Notifications" className="mr-[26px]">
          <svg viewBox="0 0 32 34" className="h-[34px] w-8" fill="none" stroke="currentColor" strokeWidth="2" strokeLinejoin="round" aria-hidden="true">
            <path d="M16 2 C9.500 2 6 7 6 13 V19 C6 22 3 24 3 27 H29 C29 24 26 22 26 19 V13 C26 7 22.500 2 16 2 Z" />
            <path d="M12 27.500 C12 33.500 20 33.500 20 27.500" />
          </svg>
        </button>
        <button type="button" aria-label="Grid view" className="mr-[31px] flex h-14 w-[90px] items-center justify-center rounded-xl bg-[#1f1e24] text-[#77767a]">
          <svg viewBox="0 0 32 32" className="size-8" fill="none" stroke="currentColor" strokeWidth="2.200" aria-hidden="true">
            <rect x="1.500" y="1.500" width="12" height="12" rx="2" />
            <rect x="18.500" y="1.500" width="12" height="12" rx="2" />
            <rect x="1.500" y="18.500" width="12" height="12" rx="2" />
            <rect x="18.500" y="18.500" width="12" height="12" rx="2" />
          </svg>
        </button>
        <button type="button" aria-label="List view" className="mr-[61px]">
          <svg viewBox="0 0 34 26" className="h-[26px] w-[34px]" fill="none" stroke="currentColor" strokeWidth="2.400" strokeLinecap="round" aria-hidden="true">
            <path d="M11 3 H32 M11 13 H32 M11 23 H32" />
            <path d="M3 3 H4 M3 13 H4 M3 23 H4" strokeWidth="3.600" />
          </svg>
        </button>
        <button type="button" aria-label="Sort" className="mr-[48px] flex items-center gap-[13px]">
          <svg viewBox="0 0 44 34" className="h-[34px] w-11" fill="none" stroke="#2d2c30" strokeWidth="2.600" strokeLinecap="round" strokeLinejoin="round" aria-hidden="true">
            <path d="M12 32 V2 M2 12 L12 2 L22 12 M32 2 V32 M22 22 L32 32 L42 22" />
          </svg>
          <ChevronDown />
        </button>
        <button type="button" aria-label="Add" className="mr-[42px] flex items-center gap-[13px]">
          <svg viewBox="0 0 30 30" className="size-[30px]" fill="none" stroke="#2d2c30" strokeWidth="2.600" strokeLinecap="round" aria-hidden="true">
            <path d="M15 2 V28 M2 15 H28" />
          </svg>
          <ChevronDown />
        </button>
        <button type="button" aria-label="Refresh">
          <svg viewBox="0 0 32 36" className="h-9 w-8" fill="none" stroke="currentColor" strokeWidth="2.400" strokeLinecap="round" strokeLinejoin="round" aria-hidden="true">
            <path d="M20.500 8.500 A13 13 0 1 0 29 21" />
            <path d="M14.500 2 L21.500 8.500 L15 15.500" />
          </svg>
        </button>
      </div>
    </div>
  );
}

function PopUp({ id, value }: { id: string; value: string }) {
  return (
    <div className="relative">
      <select
        id={id}
        defaultValue={value}
        className="block h-10 w-full appearance-none rounded-[10px] border-t-2 border-[#79777f] bg-[#62606a] pr-12 pb-1 pl-4 text-[26px] leading-8 text-[#e8e7ea] shadow-[0_1px_2px_#0006] outline-none"
      >
        <option>{value}</option>
      </select>
      <span className="pointer-events-none absolute top-1 right-[3px] flex h-8 w-8 items-center justify-center rounded-lg bg-linear-to-b from-[#3471e4] to-[#2758c8]">
        <svg viewBox="0 0 16 24" className="h-6 w-4" fill="none" stroke="#fff" strokeWidth="2.600" strokeLinecap="round" strokeLinejoin="round" aria-hidden="true">
          <path d="M2.500 8 L8 2.500 L13.500 8 M2.500 16 L8 21.500 L13.500 16" />
        </svg>
      </span>
    </div>
  );
}

function Check({ label, checked = false, disabled = false }: { label: string; checked?: boolean; disabled?: boolean }) {
  const [on, setOn] = useState(checked);
  return (
    <label className={disabled ? "flex h-7 items-center gap-3 text-[26px] text-[#6d6b75]" : "flex h-7 items-center gap-3 text-[26px] text-[#e2e1e4]"}>
      <span className="relative flex size-7 shrink-0">
        <input
          type="checkbox"
          checked={on}
          disabled={disabled}
          onChange={(e) => setOn(e.target.checked)}
          className="size-7 appearance-none rounded-[7px] bg-linear-to-b from-[#53515b] to-[#6b6972] shadow-[0_1px_2px_#0005] checked:from-[#3d7de8] checked:to-[#2d63c4] disabled:from-[#42404b] disabled:to-[#4b4954]"
        />
        {on && (
          <svg viewBox="0 0 28 28" className="pointer-events-none absolute inset-0" fill="none" stroke={disabled ? "#84828b" : "#fff"} strokeWidth="3.400" strokeLinecap="round" strokeLinejoin="round" aria-hidden="true">
            <path d="M6.500 15 L11.800 21 L21.500 7" />
          </svg>
        )}
      </span>
      {label}
    </label>
  );
}

function Tabs() {
  const [tab, setTab] = useState("General");
  const base = "flex h-10 items-center justify-center px-[23px] pb-[2px] text-[26px] leading-8";
  return (
    <div role="tablist" className="relative z-10 flex h-11 items-center self-center rounded-xl border-2 border-[#46444f] border-t-[#3e3c48] bg-[#33313d] text-[#e2e1e4]">
      {["General", "Display", "Devices & Audio", "Folders"].map((t, i) => (
        <React.Fragment key={t}>
          {i > 1 && <span className="h-6 w-[2px] bg-[#2b2935]" />}
          <button
            type="button"
            role="tab"
            aria-selected={tab === t}
            onClick={() => setTab(t)}
            className={tab === t ? `${base} rounded-[10px] bg-[#676571] shadow-[0_1px_2px_#0006]` : base}
          >
            {t}
          </button>
        </React.Fragment>
      ))}
    </div>
  );
}

const labelClass = "text-right text-[26px] leading-8 text-[#e2e1e4]";

function AddPcDialog() {
  const [name, setName] = useState("1-123.eu-north-1.compute.amazonaws.com");
  return (
    <form
      role="dialog"
      aria-labelledby="dialog-title"
      onSubmit={(e) => e.preventDefault()}
      className="flex w-[940px] flex-col rounded-[22px] border-2 border-[#58565f] bg-[#292633] px-[38px] pt-[38px] pb-[28px] shadow-[0_0_0_1px_#000,0_30px_70px_10px_#0009]"
    >
      <h2 id="dialog-title" className="text-[26px] leading-8 font-bold text-[#e2e1e4]">Add PC</h2>
      <div className="mt-[34px] grid grid-cols-[226px_534px] items-center gap-x-5 gap-y-[21px]">
        <label htmlFor="pc-name" className={labelClass}>PC name:</label>
        <div className="relative">
          <input
            id="pc-name"
            type="text"
            value={name}
            onChange={(e) => setName(e.target.value)}
            className="block h-[42px] w-full rounded-[2px] border-[3px] border-[#3f6a99] bg-[#33303d] pr-[3px] text-right text-[25px] leading-8 text-[#e2e1e4] ring-4 ring-[#3f6a99] outline-none"
          />
          <span className="pointer-events-none absolute top-[5px] right-[2px] h-8 w-[3px] rounded-full bg-[#2f7bf6]" />
        </div>
        <label htmlFor="credentials" className={labelClass}>Credentials:</label>
        <PopUp id="credentials" value="Ask when required" />
      </div>
      <div className="mt-[49px] flex flex-col">
        <Tabs />
        <div className="-mt-6 flex h-[682px] flex-col rounded-[10px] border-2 border-[#3d3b47] bg-[#2f2d39] px-[24px] pt-[60px]">
          <div className="grid grid-cols-[200px_528px] items-center gap-x-5 gap-y-[22px]">
            <label htmlFor="friendly" className={labelClass}>Friendly name:</label>
            <input
              id="friendly"
              type="text"
              placeholder="Optional"
              className="mx-[2px] block h-[38px] border border-[#45434e] border-b-[#6a6872] bg-[#393743] pl-[5px] text-[26px] leading-8 text-[#e2e1e4] outline-none placeholder:text-[#6c6a75]"
            />
            <label htmlFor="group" className={labelClass}>Group:</label>
            <PopUp id="group" value="Saved PCs" />
          </div>
          <hr className="mt-[29px] mb-[31px] border-t-2 border-[#43414d]" />
          <div className="grid grid-cols-[200px_528px] items-center gap-x-5 gap-y-[22px]">
            <label htmlFor="gateway" className={labelClass}>Gateway:</label>
            <PopUp id="gateway" value="No gateway" />
            <div className="col-start-2">
              <Check label="Bypass for local addresses" checked disabled />
            </div>
          </div>
          <hr className="mt-[31px] mb-[33px] border-t-2 border-[#43414d]" />
          <div className="ml-[220px] flex flex-col gap-4">
            <Check label="Reconnect if the connection is dropped" checked />
            <Check label="Connect to an admin session" />
            <Check label="Swap mouse buttons" />
          </div>
        </div>
      </div>
      <div className="mt-10 flex justify-end gap-6">
        <button type="button" className="h-10 w-[140px] rounded-[10px] border-t-2 border-[#79777f] bg-[#62606a] pb-[3px] text-[26px] leading-8 text-[#e8e7ea] shadow-[0_1px_2px_#0006]">
          Cancel
        </button>
        <button type="submit" className="h-10 w-[140px] rounded-[10px] border-t-2 border-[#4c82ec] bg-linear-to-b from-[#316ae0] to-[#2858c8] pb-[3px] text-[26px] leading-8 text-[#e8e7ea] shadow-[0_1px_2px_#0006]">
          Add
        </button>
      </div>
    </form>
  );
}

export default function App() {
  return (
    <div className="relative flex min-h-screen flex-col overflow-hidden bg-black font-['Inter',sans-serif]">
      <Wallpaper />
      <MenuBar />
      <div className="relative flex flex-1 overflow-hidden rounded-[22px] border-2 border-[#4e4d52] bg-[#1b1a1e] shadow-[0_0_0_1px_#000,0_10px_30px_#000]">
        <Sidebar />
        <main className="flex min-w-0 flex-1 flex-col bg-linear-to-b from-[#1b1a1e] to-[#18171b]">
          <Toolbar />
          <div className="flex flex-1 items-center justify-center">
            <p className="mt-[78px] w-[764px] text-right text-[29px] leading-[38px] font-bold text-[#2d2c30]">
              <span className="block">u through</span>
              <span className="block pr-[7px]">account</span>
            </p>
          </div>
        </main>
        <div className="absolute inset-0 flex items-center justify-center pb-[2px]">
          <AddPcDialog />
        </div>
      </div>
      <Dock />
    </div>
  );
}
